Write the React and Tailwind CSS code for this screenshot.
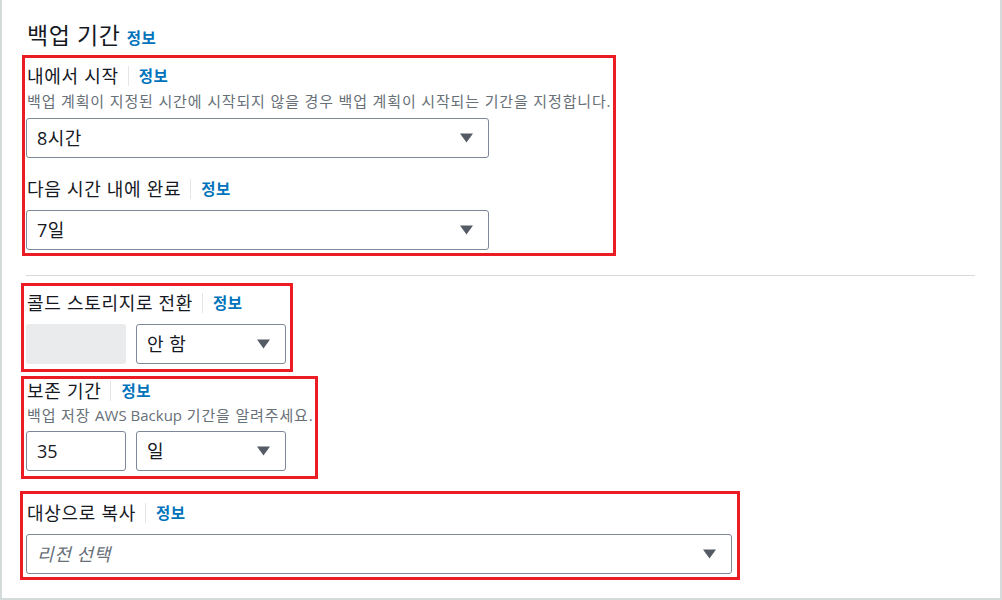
const font = "font-['Open_Sans','Noto_Sans_CJK_KR',sans-serif]";

function Arrow() {
  return (
    <svg width="13" height="10" viewBox="0 0 13 10" className="shrink-0">
      <path d="M0 0.5 H13 L6.5 9.5 Z" fill="#545b64" />
    </svg>
  );
}

function Label({ children }) {
  return (
    <div className="flex h-[22px] items-center">
      <span className="text-[18px] leading-[22px] tracking-[0.7px] text-[#16191f]">{children}</span>
      <span className="ml-[9px] mr-[10px] h-[20px] w-px bg-[#e3e6e8]" />
      <a className="text-[15.5px] font-bold leading-[22px] tracking-[0.5px] text-[#0073bb]">정보</a>
    </div>
  );
}

function Select({ value, placeholder, className = '' }) {
  return (
    <div
      className={`flex h-[40px] items-center justify-between rounded-[3px] border border-[#7d8998] bg-white pl-[10px] pr-[15px] ${className}`}
    >
      {value ? (
        <span className="text-[18px] tracking-[0.5px] text-[#16191f]">{value}</span>
      ) : (
        <span className="text-[18px] italic tracking-[0.6px] text-[#687078]">{placeholder}</span>
      )}
      <Arrow />
    </div>
  );
}

export default function App() {
  return (
    <div className={`box-border h-[600px] w-[1002px] overflow-hidden border-b-2 border-l-2 border-r-2 border-[#d5dbdb] bg-white pl-[18px] pt-[21px] ${font}`}>
      <div className="flex h-[28px] items-baseline gap-[6px] pl-[7px]">
        <h2 className="text-[23px] leading-[28px] tracking-[0.6px] text-[#16191f]">백업 기간</h2>
        <a className="text-[15.5px] font-bold tracking-[0.5px] text-[#0073bb]">정보</a>
      </div>

      <div className="ml-[2px] mt-[6px] h-[201px] w-[594px] border-[3px] border-[#ec1c24] pl-px pt-[7px]">
        <div className="pl-[1px]">
          <Label>내에서 시작</Label>
        </div>
        <p className="mt-[4px] whitespace-nowrap pl-[1px] text-[15px] leading-[20px] tracking-[0.85px] text-[#687078]">
          백업 계획이 지정된 시간에 시작되지 않을 경우 백업 계획이 시작되는 기간을 지정합니다.
        </p>
        <Select value="8시간" className="mt-[7px] w-[463px]" />
        <div className="mt-[20px] pl-[1px]">
          <Label>다음 시간 내에 완료</Label>
        </div>
        <Select value="7일" className="mt-[10px] w-[463px]" />
      </div>

      <div className="ml-[6px] mt-[19px] h-px w-[949px] bg-[#d5dbdb]" />

      <div className="ml-px mt-[7px] h-[89px] w-[272px] border-[3px] border-[#ec1c24] pl-[2px] pt-[6px]">
        <div className="pl-[1px]">
          <Label>콜드 스토리지로 전환</Label>
        </div>
        <div className="mt-[10px] flex gap-[10px]">
          <div className="h-[40px] w-[100px] rounded-[3px] bg-[#e9ebed]" />
          <Select value="안 함" className="w-[150px]" />
        </div>
      </div>

      <div className="ml-px mt-[4px] h-[103px] w-[297px] border-[3px] border-[#ec1c24] pl-[2px] pt-[1px]">
        <div className="pl-[1px]">
          <Label>보존 기간</Label>
        </div>
        <p className="mt-[3px] whitespace-nowrap pl-[1px] text-[15px] leading-[20px] tracking-[0.85px] text-[#687078]">
          백업 저장 <span className="tracking-normal">AWS Backup</span> 기간을 알려주세요.
        </p>
        <div className="mt-[6px] flex gap-[10px]">
          <div className="flex h-[40px] w-[100px] items-center rounded-[3px] border border-[#7d8998] pl-[10px] text-[18px] text-[#16191f]">
            35
          </div>
          <Select value="일" className="w-[150px]" />
        </div>
      </div>

      <div className="mt-[12px] h-[89px] w-[720px] border-[3px] border-[#ec1c24] pl-[3px] pt-[8px]">
        <div className="pl-[1px]">
          <Label>대상으로 복사</Label>
        </div>
        <Select placeholder="리전 선택" className="mt-[10px] w-[706px]" />
      </div>
    </div>
  );
}
